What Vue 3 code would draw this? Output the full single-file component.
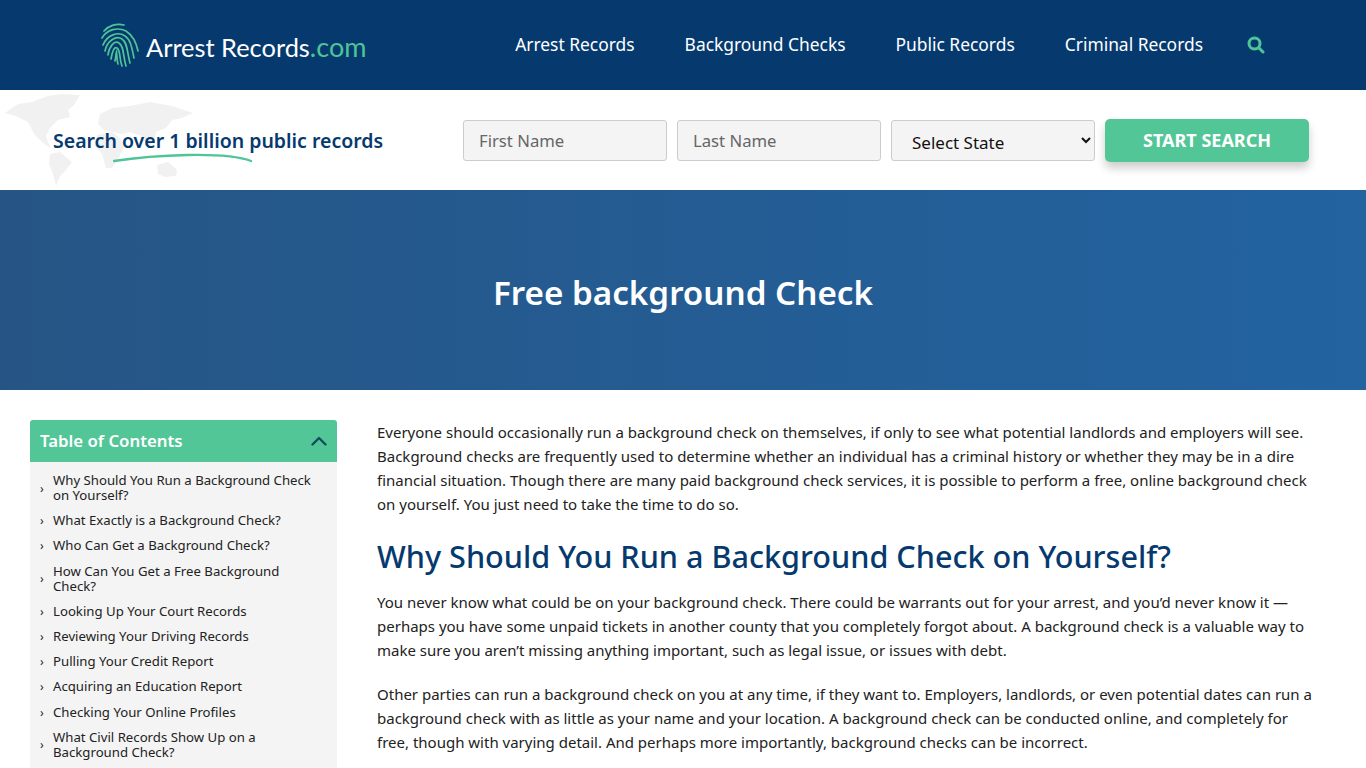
<script setup>
const navLinks = ['Arrest Records', 'Background Checks', 'Public Records', 'Criminal Records']

const tocItems = [
  'Why Should You Run a Background Check on Yourself?',
  'What Exactly is a Background Check?',
  'Who Can Get a Background Check?',
  'How Can You Get a Free Background Check?',
  'Looking Up Your Court Records',
  'Reviewing Your Driving Records',
  'Pulling Your Credit Report',
  'Acquiring an Education Report',
  'Checking Your Online Profiles',
  'What Civil Records Show Up on a Background Check?'
]
</script>

<template>
  <div class="page">
    <header class="topbar">
      <a class="logo">
        <svg class="print" viewBox="0 0 38 44" fill="none" stroke="#4fc497" stroke-width="1.7" stroke-linecap="round">
          <path d="M3 8 C7 3 15 0 23 2" />
          <path d="M1 15 C6 6 17 4 25 8 C31 12 35 18 37 28" />
          <path d="M2 22 C6 12 17 8 24 13 C30 17 31 26 33 35" />
          <path d="M4 28 C6 18 15 12 21 16 C27 20 26 30 29 40" />
          <path d="M7 32 C8 24 13 17 18 20 C23 23 22 33 25 43" />
          <path d="M10 36 C11 30 13 23 16 25 C20 28 18 36 21 43" />
          <path d="M14 38 C15 33 15 30 15.5 29 C16 33 16 38 17 41" />
        </svg>
        <span class="logo-text">Arrest Records<span class="logo-com">.com</span></span>
      </a>
      <nav class="nav">
        <a v-for="link in navLinks" :key="link" class="nav-link">{{ link }}</a>
        <svg class="nav-search" viewBox="0 0 18 18" fill="none" stroke="#4fc497" stroke-width="3" stroke-linecap="round">
          <circle cx="7.5" cy="7.5" r="5.5" />
          <path d="M12 12 L16 16" />
        </svg>
      </nav>
    </header>

    <section class="searchbar">
      <svg class="map" viewBox="0 0 200 100" fill="#f1f1f1">
        <path d="M5 23 L18 14 L32 12 L48 6 L62 4 L80 5 L74 15 L68 20 L70 27 L58 30 L50 38 L46 46 L50 58 L42 52 L34 44 L28 32 L16 26 Z" />
        <path d="M50 64 L60 62 L72 72 L66 80 L60 86 L56 96 L53 84 L49 74 Z" />
        <path d="M100 24 L112 18 L130 16 L150 12 L172 16 L193 23 L182 28 L172 30 L166 38 L156 42 L154 52 L147 56 L142 46 L130 42 L122 44 L104 40 L98 34 Z" />
        <path d="M97 45 L112 42 L120 48 L124 56 L119 68 L112 78 L106 78 L102 64 L95 56 Z" />
        <path d="M157 75 L168 72 L177 80 L176 86 L165 87 L158 84 Z" />
      </svg>
      <div class="tagline">
        Search over 1 billion public records
        <svg class="swoosh" viewBox="0 0 140 12" fill="none" stroke="#4fc497" stroke-width="2.4" stroke-linecap="round">
          <path d="M1 9 C40 3 112 -1 138 9" />
        </svg>
      </div>
      <form class="search-form" @submit.prevent>
        <input class="field" type="text" placeholder="First Name" />
        <input class="field" type="text" placeholder="Last Name" />
        <select class="field state">
          <option>Select State</option>
        </select>
        <button class="start" type="button">START SEARCH</button>
      </form>
    </section>

    <section class="hero">
      <h1>Free background Check</h1>
    </section>

    <div class="content">
      <aside class="toc">
        <div class="toc-head">
          <span>Table of Contents</span>
          <svg class="toc-chevron" viewBox="0 0 16 10" fill="none" stroke="#0f4f5c" stroke-width="2.4" stroke-linecap="round" stroke-linejoin="round">
            <path d="M1.5 8.5 L8 2 L14.5 8.5" />
          </svg>
        </div>
        <ul class="toc-list">
          <li v-for="item in tocItems" :key="item">
            <span class="arrow">›</span>
            <a>{{ item }}</a>
          </li>
        </ul>
      </aside>

      <main class="article">
        <p>Everyone should occasionally run a background check on themselves, if only to see what potential landlords and employers will see. Background checks are frequently used to determine whether an individual has a criminal history or whether they may be in a dire financial situation. Though there are many paid background check services, it is possible to perform a free, online background check on yourself. You just need to take the time to do so.</p>
        <h2>Why Should You Run a Background Check on Yourself?</h2>
        <p>You never know what could be on your background check. There could be warrants out for your arrest, and you’d never know it — perhaps you have some unpaid tickets in another county that you completely forgot about. A background check is a valuable way to make sure you aren’t missing anything important, such as legal issue, or issues with debt.</p>
        <p>Other parties can run a background check on you at any time, if they want to. Employers, landlords, or even potential dates can run a background check with as little as your name and your location. A background check can be conducted online, and completely for free, though with varying detail. And perhaps more importantly, background checks can be incorrect.</p>
      </main>
    </div>
  </div>
</template>

<style>
html, body {
  margin: 0;
  background: #fff;
}
</style>

<style scoped>
.page {
  height: 768px;
  overflow: hidden;
  font-family: "Noto Sans", "Open Sans", sans-serif;
  color: #222;
}

.topbar {
  height: 90px;
  background: #063a6f;
  display: flex;
  align-items: center;
  padding: 0 100px 0 101px;
  justify-content: space-between;
}
.logo {
  display: flex;
  align-items: center;
  gap: 7px;
}
.print {
  width: 38px;
  height: 44px;
}
.logo-text {
  font-family: Lato, sans-serif;
  font-size: 25.4px;
  color: #fff;
  padding-top: 3px;
}
.logo-com {
  color: #4fc497;
  font-size: 27px;
}
.nav {
  display: flex;
  align-items: center;
  gap: 50px;
  margin-right: 1px;
}
.nav-link {
  color: #fff;
  font-size: 17.4px;
  line-height: 24px;
  padding-bottom: 2px;
}
.nav-search {
  width: 18px;
  height: 18px;
  margin-left: -6px;
}

.searchbar {
  position: relative;
  height: 100px;
  display: flex;
  align-items: center;
  justify-content: space-between;
  padding: 0 57px 0 53px;
  background: #fff;
}
.map {
  position: absolute;
  left: 0;
  top: 0;
  width: 200px;
  height: 100px;
}
.tagline {
  position: relative;
  font-size: 19.5px;
  font-weight: 600;
  color: #063a6f;
}
.swoosh {
  position: absolute;
  left: 60px;
  top: 25px;
  width: 140px;
  height: 12px;
}
.search-form {
  display: flex;
  align-items: center;
  gap: 10px;
}
.field {
  box-sizing: border-box;
  width: 204px;
  height: 41px;
  padding: 0 15px;
  background: #f4f4f4;
  border: 1px solid #ccc;
  border-radius: 3px;
  font-family: inherit;
  font-size: 16.7px;
  color: #333;
}
.field::placeholder {
  color: #666;
  opacity: 1;
}
.state {
  color: #111;
  font-size: 17px;
  padding: 4px 16px 0;
}
.start {
  width: 204px;
  height: 43px;
  background: #53c697;
  border: 0;
  border-radius: 5px;
  box-shadow: 0 6px 10px rgba(0, 0, 0, 0.2);
  color: #fff;
  font-family: inherit;
  font-size: 18px;
  font-weight: 700;
}

.hero {
  height: 200px;
  background: linear-gradient(90deg, #265585 0%, #2263a0 100%);
  display: flex;
  align-items: center;
  justify-content: center;
}
.hero h1 {
  margin: 4px 0 0;
  color: #fff;
  font-size: 33.2px;
  font-weight: 600;
}

.content {
  display: flex;
  gap: 40px;
  padding: 30px 50px 0 30px;
}
.toc {
  flex: 0 0 307px;
}
.toc-head {
  height: 42px;
  box-sizing: border-box;
  padding: 0 10px 2px;
  background: #53c697;
  border-radius: 3px 3px 0 0;
  display: flex;
  align-items: center;
  justify-content: space-between;
  color: #fff;
  font-size: 16.8px;
  font-weight: 600;
}
.toc-chevron {
  width: 16px;
  height: 10px;
  margin-top: 2px;
}
.toc-list {
  list-style: none;
  margin: 0;
  padding: 11px 20px 30px 10px;
  background: #f4f4f4;
}
.toc-list li {
  display: flex;
  align-items: center;
  gap: 9px;
  margin-bottom: 10.2px;
  font-size: 13.2px;
  line-height: 15px;
  color: #222;
}
.arrow {
  flex: 0 0 4px;
  font-size: 12px;
}

.article {
  flex: 1;
  font-size: 15px;
  line-height: 24px;
  color: #222;
}
.article p {
  margin: 0 0 20px;
}
.article h2 {
  margin: 0 0 14px;
  color: #063a6f;
  font-size: 30.6px;
  line-height: 40px;
  font-weight: 500;
}
</style>
